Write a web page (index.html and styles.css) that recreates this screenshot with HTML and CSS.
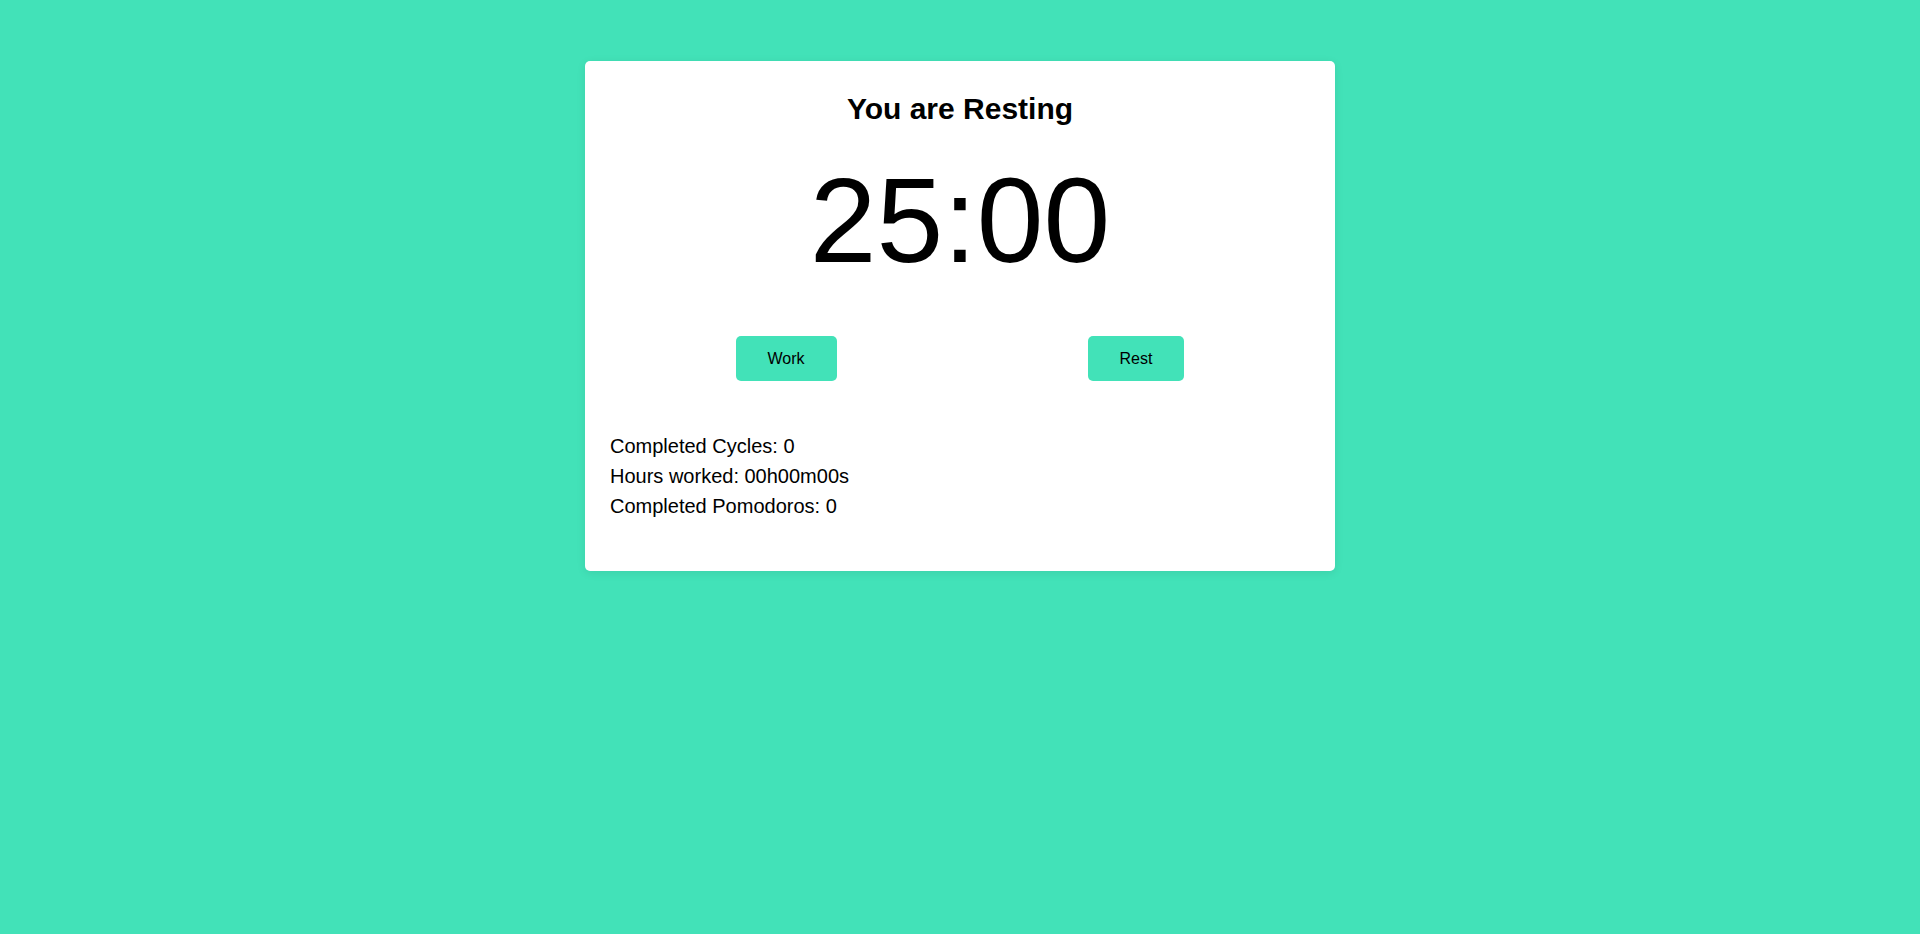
FILE: index.html
```html
<!DOCTYPE html>
<html lang="en">
<head>
<meta charset="utf-8">
<title>Pomodoro</title>
<link rel="stylesheet" href="styles.css">
</head>
<body>
  <main class="card">
    <h1 class="title">You are Resting</h1>
    <div class="timer">25:00</div>
    <div class="controls">
      <button class="btn">Work</button>
      <button class="btn">Rest</button>
    </div>
    <div class="stats">
      <p class="stat">Completed Cycles: 0</p>
      <p class="stat">Hours worked: 00h00m00s</p>
      <p class="stat">Completed Pomodoros: 0</p>
    </div>
  </main>
</body>
</html>
```
FILE: styles.css
```css
* { box-sizing: border-box; }

html, body {
  margin: 0;
  padding: 0;
}

body {
  background: #42e2b8;
  font-family: "Liberation Sans", Arial, sans-serif;
  color: #000;
  min-height: 934px;
  padding-top: 61px;
}

.card {
  width: 750px;
  margin: 0 auto;
  background: #fff;
  border-radius: 5px;
  padding: 25px;
  box-shadow: 0 2px 10px rgba(0, 0, 0, 0.08);
}

.title {
  margin: 5px 0 0;
  font-size: 30px;
  line-height: 36px;
  font-weight: bold;
  text-align: center;
}

.timer {
  margin-top: 33px;
  font-size: 120px;
  line-height: 120px;
  text-align: center;
}

.controls {
  display: flex;
  justify-content: space-around;
  margin-top: 56px;
}

.btn {
  font-family: "Liberation Sans", Arial, sans-serif;
  font-size: 16px;
  color: #000;
  background: #42e2b8;
  border: none;
  border-radius: 5px;
  height: 45px;
  padding: 0 32px;
  line-height: 45px;
  cursor: pointer;
}

.stats {
  margin: 50px 0 25px;
}

.stat {
  margin: 0;
  font-size: 20px;
  line-height: 30px;
}
```
